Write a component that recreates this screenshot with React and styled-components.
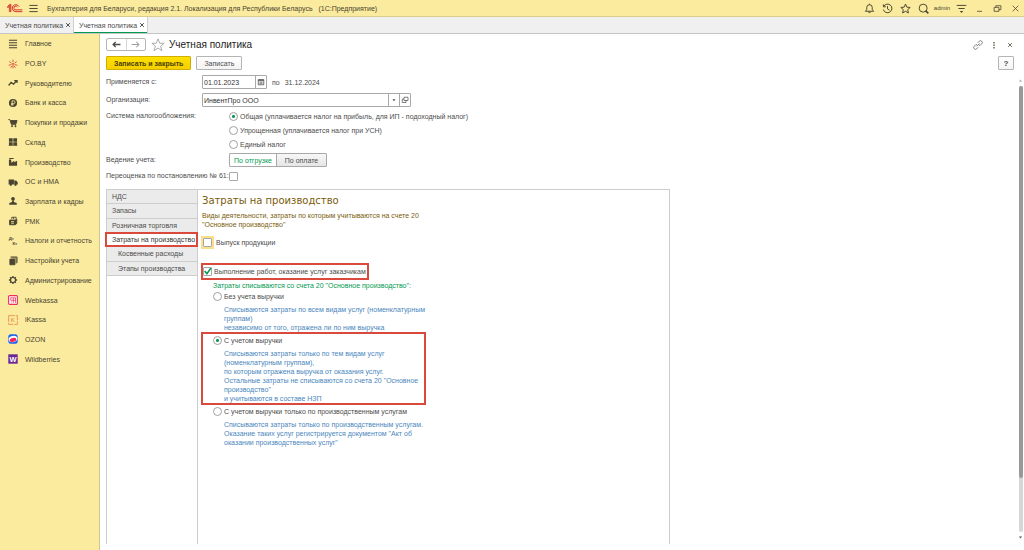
import React from 'react'
import styled, { createGlobalStyle, css } from 'styled-components'

const colors = {
  bar: '#faeb9e',
  tabs: '#f0f0f0',
  text: '#4c4c4c',
  red: '#d9493c',
  green: '#009a50',
  gold: '#7a5c0a',
  blue: '#4a86bd',
  line: '#a8a8a8',
}

const GlobalStyle = createGlobalStyle`
  * {
    box-sizing: border-box;
  }
  body {
    margin: 0;
    background: #fff;
    color: ${colors.text};
    font: 7px/9px 'Liberation Sans', Arial, sans-serif;
  }
  button, input {
    margin: 0;
    padding: 0;
    font: inherit;
    color: inherit;
  }
  a {
    color: inherit;
    text-decoration: none;
  }
  svg {
    display: block;
    flex: none;
  }
`

const Page = styled.div`
  display: flex;
  flex-direction: column;
  min-height: 100vh;
`
const TopBar = styled.header`
  display: flex;
  align-items: center;
  height: 17px;
  padding-left: 6px;
  background: ${colors.bar};
  border-bottom: 1px solid #d9cd8e;
`
const AppTitle = styled.h1`
  flex: 1;
  margin: 0 0 0 4px;
  font-size: 7px;
  font-weight: normal;
  color: #4a4430;
  white-space: pre;
`
const IconButton = styled.button`
  display: flex;
  align-items: center;
  justify-content: center;
  width: ${props => props.$width || 18}px;
  height: 14px;
  border: 0;
  background: none;
  color: #4a4430;
`
const User = styled.a`
  width: 20px;
  font-size: 6px;
  text-align: center;
  color: #4a4430;
`
const TabBar = styled.nav`
  display: flex;
  height: 17px;
  background: ${colors.tabs};
  border-bottom: 1px solid #c6c6c6;
`
const WindowTab = styled.button`
  display: flex;
  align-items: center;
  gap: 2px;
  width: 74px;
  padding: 0 0 0 5px;
  border: 0;
  border-right: 1px solid #d0d0d0;
  background: ${props => (props.$active ? '#fff' : 'none')};
  box-shadow: ${props =>
    props.$active ? `inset 0 -1px ${colors.green}` : 'none'};
  white-space: nowrap;
`
const Body = styled.div`
  display: flex;
  flex: 1;
`
const Sidebar = styled.nav`
  flex: none;
  width: 100px;
  background: ${colors.bar};
  border-right: 1px solid #cfc58f;
`
const Menu = styled.ul`
  display: grid;
  grid-template-rows: repeat(17, 1fr);
  height: 335px;
  margin: 0;
  padding: 0;
  list-style: none;
`
const MenuItem = styled.li`
  display: flex;
  align-items: center;
  a {
    display: flex;
    align-items: center;
    gap: 7px;
    padding-left: 8px;
    color: #4a4430;
    white-space: nowrap;
  }
`
const Main = styled.main`
  display: flex;
  flex-direction: column;
  flex: 1;
  min-width: 0;
  padding: 4px 0 6px 6px;
`
const Heading = styled.div`
  display: flex;
  align-items: center;
  height: 13px;
  padding-right: 6px;
`
const Arrows = styled.div`
  display: flex;
  width: 40px;
  height: 13px;
  margin-right: 5px;
  border: 1px solid #b5b5b5;
  border-radius: 2px;
  button {
    flex: 1;
    display: flex;
    align-items: center;
    justify-content: center;
    border: 0;
    background: none;
  }
  button + button {
    border-left: 1px solid #d5d5d5;
    color: #a0a0a0;
  }
`
const FormTitle = styled.h2`
  flex: 1;
  margin: 0 0 0 4px;
  font-size: 10px;
  line-height: 13px;
  font-weight: normal;
  color: #222;
`
const Columns = styled.div`
  display: flex;
  flex: 1;
  margin-top: 5px;
`
const Content = styled.div`
  display: flex;
  flex-direction: column;
  flex: 1;
`
const Commands = styled.div`
  display: flex;
  gap: 5px;
  margin-bottom: 5px;
`
const Button = styled.button`
  height: 14px;
  padding: 0 7px;
  border: 1px solid #b5b5b5;
  border-radius: 1px;
  background: linear-gradient(#fff, #f4f4f4);
  white-space: nowrap;
  ${props =>
    props.$primary &&
    css`
      border-color: #d0ae00;
      background: linear-gradient(#ffe000, #f5cf00);
      font-weight: bold;
      color: #4a4000;
    `}
`
const Field = styled.div`
  display: grid;
  grid-template-columns: 96px 1fr;
  align-items: center;
  min-height: 14px;
  margin-bottom: ${props => props.$gap || 0}px;
  white-space: nowrap;
`
const FieldLabel = styled.label`
  line-height: 14px;
  align-self: start;
`
const Row = styled.div`
  display: flex;
  align-items: center;
  gap: 5px;
`
const InputBox = styled.div`
  display: flex;
  width: ${props => props.$width}px;
  height: 14px;
  border: 1px solid ${colors.line};
  border-radius: 1px;
  input {
    flex: 1;
    min-width: 0;
    padding-left: 1px;
    border: 0;
    outline: 0;
    color: #333;
  }
  button {
    display: flex;
    align-items: center;
    justify-content: center;
    width: 11px;
    border: 0;
    border-left: 1px solid ${colors.line};
    background: none;
  }
`
const Options = styled.div`
  padding-left: 27px;
`
const Option = styled.label`
  display: flex;
  align-items: center;
  gap: 2px;
  height: ${props => props.$height || 14}px;
`
const Radio = styled.input.attrs({ type: 'radio' })`
  appearance: none;
  flex: none;
  width: 9px;
  height: 9px;
  border: 1px solid #a0a0a0;
  border-radius: 50%;
  background: #fff;
  &:checked {
    background: radial-gradient(${colors.green} 1px, #fff 2px);
  }
`
const CheckMark = styled.span`
  display: grid;
  flex: none;
  width: ${props => (props.$focused ? 13 : 9)}px;
  border: ${props => (props.$focused ? '2px solid #fae08c' : '0')};
  > * {
    grid-area: 1 / 1;
  }
  svg {
    visibility: hidden;
    pointer-events: none;
    color: ${colors.green};
  }
  input:checked + svg {
    visibility: visible;
  }
`
const CheckInput = styled.input.attrs({ type: 'checkbox' })`
  appearance: none;
  width: 9px;
  height: 9px;
  border: 1px solid #a8a8a8;
  border-radius: 1px;
  background: #fff;
`
const Segments = styled.div`
  display: flex;
  width: 98px;
  height: 14px;
  margin-left: 27px;
  border: 1px solid ${colors.line};
  border-radius: 1px;
  button {
    flex: 1;
    border: 0;
    background: linear-gradient(#f7f7f7, #e6e6e6);
  }
  button[aria-pressed='true'] {
    flex: 0 0 47px;
    border-right: 1px solid ${colors.line};
    background: #fff;
    color: ${colors.green};
  }
`
const Panel = styled.section`
  display: flex;
  flex: 1;
  width: 63.5%;
  margin-top: 6px;
  border: 1px solid #cdcdcd;
  border-bottom: 0;
`
const SideTabs = styled.div`
  flex: none;
  width: 91px;
  border-right: 1px solid #cdcdcd;
`
const TabList = styled.div`
  display: grid;
  grid-template-rows: repeat(6, 1fr);
  height: 86px;
`
const SideTab = styled.button`
  padding: 0 0 0 ${props => (props.$nested ? 11 : 5)}px;
  border: 0;
  border-bottom: 1px solid #cdcdcd;
  background: #ebebeb;
  text-align: left;
  white-space: nowrap;
  &[aria-selected='true'] {
    margin: -1px -1px 0 -2px;
    border: 2px solid ${colors.red};
    background: #fff;
    color: #333;
  }
`
const Costs = styled.div`
  padding: 4px 3px;
`
const CostsTitle = styled.h3`
  margin: 0 0 3px 1px;
  font: 10px/14px 'DejaVu Sans', Verdana, sans-serif;
  color: ${colors.gold};
`
const CostsNote = styled.p`
  margin: 0 0 7px 1px;
  color: ${colors.gold};
  white-space: pre-line;
`
const Marked = styled.div`
  width: ${props => props.$width}px;
  padding: 0 ${props => (props.$marked ? 0 : 2)}px;
  border: ${props => (props.$marked ? `2px solid ${colors.red}` : '0')};
`
const CostsLabel = styled.p`
  margin: 1px 0 0 12px;
  color: ${colors.green};
`
const Variant = styled(Marked)`
  label {
    margin-left: 10px;
  }
  p {
    margin: 3px 0 0 21px;
    color: ${colors.blue};
    white-space: pre;
  }
`
const Aside = styled.aside`
  display: flex;
  flex-direction: column;
  align-items: flex-end;
  width: 30px;
`
const HelpButton = styled(Button)`
  width: 16px;
  margin: 0 10px 8px 0;
  padding: 0;
  font-weight: bold;
  font-size: 8px;
`
const ScrollBar = styled.div`
  display: flex;
  flex-direction: column;
  align-items: center;
  flex: 1;
  gap: 3px;
  width: 5px;
  margin: 0 1px 4px 0;
`
const ScrollTrack = styled.div`
  flex: 1;
  width: 4px;
  border-radius: 2px;
  background: #d6d6d6;
`
const ScrollThumb = styled.div`
  height: 88%;
  border-radius: 2px;
  background: #999;
`

const Icon = ({ size = 11, children, ...rest }) => (
  <svg
    width={size}
    height={size}
    viewBox="0 0 16 16"
    fill="none"
    stroke="currentColor"
    strokeWidth="1.4"
    aria-hidden="true"
    {...rest}
  >
    {children}
  </svg>
)

const Logo = () => (
  <svg width="18" height="12" viewBox="0 0 54 36" fill="none" aria-hidden="true">
    <g stroke="#d5322c" strokeWidth="3">
      <path strokeWidth="2" fill="#e2604a" d="M4 14L11 7H15V29H10V14L5 17Z" />
      <path d="M39 14A10.500 10.500 0 1 0 30 29H49" />
      <path d="M34 15.500A5.500 5.500 0 1 0 30 23.500H49" />
    </g>
  </svg>
)

const Close = () => (
  <Icon size={6} strokeWidth="2.600">
    <path d="M3 3L13 13M13 3L3 13" />
  </Icon>
)

const menu = [
  ['Главное', <path strokeWidth="1.700" d="M1.500 2H14.500M1.500 6H14.500M1.500 10H14.500M1.500 14H14.500" />],
  [
    'PO.BY',
    <g stroke="#dc4a35">
      <path d="M8 1V5M8 11V15M2 4L5.500 6.500M14 4L10.500 6.500M1 10L5 9M15 10L11 9M4 14L6.500 11M12 14L9.500 11" />
      <circle cx="8" cy="8.500" r="1.600" />
    </g>,
  ],
  ['Руководителю', <path strokeWidth="2" d="M1 12L5 7L9 10L14 4M10 4H14.500V8" />],
  [
    'Банк и касса',
    <g>
      <circle cx="8" cy="8" r="6.500" fill="currentColor" stroke="none" />
      <path stroke="#faeb9e" d="M6.500 12.500V4.500H9A2 2 0 0 1 9 9H5M5 10.800H9" />
    </g>,
  ],
  [
    'Покупки и продажи',
    <g>
      <path d="M0.500 2.500H3L5.500 10.500H13" />
      <path fill="currentColor" d="M4 4H14.500L13 9H5.500Z" />
      <circle cx="6.500" cy="13" r="1" fill="currentColor" />
      <circle cx="12" cy="13" r="1" fill="currentColor" />
    </g>,
  ],
  [
    'Склад',
    <path fill="currentColor" stroke="none" d="M1.500 2H7.500V7.500H1.500ZM8.500 2H14.500V7.500H8.500ZM1.500 8.500H7.500V13H1.500ZM8.500 8.500H14.500V13H8.500ZM1 13.500H15V14.500H1Z" />,
  ],
  [
    'Производство',
    <path fill="currentColor" stroke="none" d="M1.500 14V4H5L5.500 9L10 6V8.500L14.500 6V14ZM2 1.500H9V3.200H2Z" />,
  ],
  [
    'ОС и НМА',
    <g fill="currentColor" stroke="none">
      <path d="M1 4H9.500V12H1ZM10 5.500H13L15.500 8.500V12H10Z" />
      <circle cx="4.500" cy="12.500" r="1.800" />
      <circle cx="12" cy="12.500" r="1.800" />
    </g>,
  ],
  [
    'Зарплата и кадры',
    <g fill="currentColor" stroke="none">
      <circle cx="8" cy="4.500" r="3" />
      <path d="M6.500 7H9.500V9.500L14 11V14H2V11L6.500 9.500Z" />
    </g>,
  ],
  [
    'РМК',
    <g>
      <path d="M6 5V2H13V5M9 2V5" />
      <path fill="currentColor" d="M2.500 6.500H11.500V14H2.500ZM11.500 6.500L14 5V12L11.500 14" />
      <path stroke="#faeb9e" d="M5 9H9.500M5 11.500H9.500" />
    </g>,
  ],
  [
    'Налоги и отчетность',
    <g fill="currentColor" stroke="none" fontSize="7" fontWeight="bold">
      <text x="1" y="7">Дт</text>
      <text x="7" y="14">Кт</text>
    </g>,
  ],
  [
    'Настройки учета',
    <g>
      <path fill="currentColor" d="M3 5H11V14H3Z" />
      <path d="M5 3H13V12M4 1.500H14.500V11" />
    </g>,
  ],
  [
    'Администрирование',
    <g>
      <circle cx="8" cy="8" r="4" strokeWidth="1.800" />
      <path strokeWidth="2.200" d="M8 1.500V4M8 12V14.500M1.500 8H4M12 8H14.500M3.500 3.500L5.200 5.200M10.800 10.800L12.500 12.500M12.500 3.500L10.800 5.200M5.200 10.800L3.500 12.500" />
    </g>,
  ],
  [
    'Webkassa',
    <g>
      <rect x="1" y="1" width="14" height="14" rx="1.500" fill="#fff" stroke="#ee2f5b" strokeWidth="1.800" />
      <path stroke="#ee2f5b" strokeWidth="1.200" d="M4 4.500H12.500M4.500 4.500V8.500H12M5.500 11H6.500M5.500 13H6.500M8.500 4.500V12.500M12 4.500V12.500" />
    </g>,
  ],
  [
    'iKassa',
    <g>
      <rect x="1" y="1" width="14" height="14" stroke="#e8914d" strokeDasharray="10 1.500" />
      <text x="4.500" y="11.500" fontSize="10" fill="#e87d35" stroke="none">K</text>
    </g>,
  ],
  [
    'OZON',
    <g stroke="none">
      <rect x="0.500" y="0.500" width="15" height="15" rx="4" fill="#1762f5" />
      <ellipse cx="8" cy="8" rx="7" ry="5" fill="#fff" transform="rotate(-15 8 8)" />
      <ellipse cx="8" cy="9.500" rx="5.500" ry="3.200" fill="#f4245e" transform="rotate(-15 8 9.500)" />
    </g>,
  ],
  [
    'Wildberries',
    <g stroke="none">
      <rect x="0.500" y="0.500" width="15" height="15" fill="#6c2592" />
      <text x="8" y="12.500" fontSize="12" fontWeight="bold" textAnchor="middle" fill="#fff">W</text>
    </g>,
  ],
]

const taxes = [
  'Общая (уплачивается налог на прибыль, для ИП - подоходный налог)',
  'Упрощенная (уплачивается налог при УСН)',
  'Единый налог',
]

const sections = [
  { title: 'НДС' },
  { title: 'Запасы' },
  { title: 'Розничная торговля' },
  { title: 'Затраты на производство', active: true },
  { title: 'Косвенные расходы', nested: true },
  { title: 'Этапы производства', nested: true },
]

const variants = [
  {
    title: 'Без учета выручки',
    text: `Списываются затраты по всем видам услуг (номенклатурным
группам)
независимо от того, отражена ли по ним выручка`,
  },
  {
    title: 'С учетом выручки',
    text: `Списываются затраты только по тем видам услуг
(номенклатурным группам),
по которым отражена выручка от оказания услуг.
Остальные затраты не списываются со счета 20 "Основное
производство"
и учитываются в составе НЗП`,
    marked: true,
  },
  {
    title: 'С учетом выручки только по производственным услугам',
    text: `Списываются затраты только по производственным услугам.
Оказание таких услуг регистрируется документом "Акт об
оказании производственных услуг"`,
  },
]

const Checkbox = ({ focused, ...rest }) => (
  <CheckMark $focused={focused}>
    <CheckInput {...rest} />
    <Icon size={9} strokeWidth="2.800">
      <path d="M3 7L7 12L14 2" />
    </Icon>
  </CheckMark>
)

const Header = () => (
  <TopBar>
    <Logo />
    <IconButton $width={19} aria-label="Меню">
      <Icon>
        <path d="M2 3.500H14M2 8H14M2 12.500H14" />
      </Icon>
    </IconButton>
    <AppTitle>
      {
        'Бухгалтерия для Беларуси, редакция 2.1. Локализация для Республики Беларусь   (1С:Предприятие)'
      }
    </AppTitle>
    <IconButton aria-label="Уведомления">
      <Icon>
        <path d="M2 12H14L12 9.500V6.500A4 4 0 0 0 4 6.500V9.500ZM6.500 12.500A1.500 1.500 0 0 0 9.500 12.500M8 1V2.500" />
      </Icon>
    </IconButton>
    <IconButton aria-label="История">
      <Icon>
        <path d="M2.500 5A6.300 6.300 0 1 1 2 9.500M2 2V5.500H5.500M8 4.500V8.500L11 10.500" />
      </Icon>
    </IconButton>
    <IconButton aria-label="Избранное">
      <Icon>
        <path d="M8 1.500L10 6L14.800 6.500L11.200 9.700L12.200 14.500L8 12L3.800 14.500L4.800 9.700L1.200 6.500L6 6Z" />
      </Icon>
    </IconButton>
    <IconButton aria-label="Поиск">
      <Icon>
        <circle cx="7.500" cy="7.500" r="5.800" />
        <path strokeWidth="2.400" d="M11 11L15 15" />
      </Icon>
    </IconButton>
    <User href="#admin">admin</User>
    <IconButton aria-label="Настройки">
      <Icon>
        <path d="M1 3.500H15M3.500 8H12.500" />
        <path fill="currentColor" stroke="none" d="M5.500 11.500H10.500L8 14.500Z" />
      </Icon>
    </IconButton>
    <IconButton aria-label="Свернуть">
      <Icon size={9}>
        <path d="M3.500 13H12.500" />
      </Icon>
    </IconButton>
    <IconButton aria-label="Восстановить">
      <Icon size={9}>
        <path d="M2 6H10.500V13H2ZM5 6V3H14V10H10.500" />
      </Icon>
    </IconButton>
    <IconButton aria-label="Закрыть">
      <Icon size={9}>
        <path d="M3 3L13 13M13 3L3 13" />
      </Icon>
    </IconButton>
  </TopBar>
)

const Settings = () => (
  <>
    <Commands>
      <Button $primary>Записать и закрыть</Button>
      <Button>Записать</Button>
    </Commands>
    <Field $gap={4}>
      <FieldLabel htmlFor="from">Применяется с:</FieldLabel>
      <Row>
        <InputBox $width={65}>
          <input id="from" defaultValue="01.01.2023" />
          <button aria-label="Календарь">
            <Icon size={8} strokeWidth="1.600">
              <path d="M2.500 3H13.500V13.500H2.500ZM2.500 5H13.500M5 8H11M5 10.500H11" />
            </Icon>
          </button>
        </InputBox>
        <span>по</span>
        <span>31.12.2024</span>
      </Row>
    </Field>
    <Field $gap={2}>
      <FieldLabel htmlFor="company">Организация:</FieldLabel>
      <InputBox $width={209}>
        <input id="company" defaultValue="ИнвентПро ООО" />
        <button aria-label="Выбрать">
          <Icon size={6}>
            <path fill="currentColor" stroke="none" d="M4 6H12L8 11Z" />
          </Icon>
        </button>
        <button aria-label="Открыть">
          <Icon size={8}>
            <path d="M6 2.500H14V9H6ZM6 6H2.500V13H10V9" />
          </Icon>
        </button>
      </InputBox>
    </Field>
    <Field $gap={2}>
      <FieldLabel as="span">Система налогообложения:</FieldLabel>
      <Options>
        {taxes.map((tax, i) => (
          <Option key={tax}>
            <Radio name="tax" defaultChecked={i === 0} />
            {tax}
          </Option>
        ))}
      </Options>
    </Field>
    <Field $gap={2}>
      <FieldLabel as="span">Ведение учета:</FieldLabel>
      <Segments>
        <button aria-pressed="true">По отгрузке</button>
        <button aria-pressed="false">По оплате</button>
      </Segments>
    </Field>
    <Field>
      <FieldLabel htmlFor="revaluation">
        Переоценка по постановлению № 61:
      </FieldLabel>
      <Options>
        <Checkbox id="revaluation" />
      </Options>
    </Field>
  </>
)

const ProductionCosts = () => (
  <Costs>
    <CostsTitle>Затраты на производство</CostsTitle>
    <CostsNote>
      {`Виды деятельности, затраты по которым учитываются на счете 20
"Основное производство"`}
    </CostsNote>
    <Option $height={12}>
      <Checkbox focused />
      Выпуск продукции
    </Option>
    <Option as="div" $height={15} />
    <Marked $marked $width={168}>
      <Option $height={13}>
        <Checkbox defaultChecked />
        Выполнение работ, оказание услуг заказчикам
      </Option>
    </Marked>
    <CostsLabel>
      Затраты списываются со счета 20 "Основное производство":
    </CostsLabel>
    {variants.map(({ title, text, marked }) => (
      <Variant key={title} $marked={marked} $width={225}>
        <Option $height={12}>
          <Radio name="variant" defaultChecked={marked} />
          {title}
        </Option>
        <p>{text}</p>
      </Variant>
    ))}
  </Costs>
)

const App = () => (
  <Page>
    <GlobalStyle />
    <Header />
    <TabBar>
      <WindowTab>
        Учетная политика <Close />
      </WindowTab>
      <WindowTab $active>
        Учетная политика <Close />
      </WindowTab>
    </TabBar>
    <Body>
      <Sidebar>
        <Menu>
          {menu.map(([title, icon]) => (
            <MenuItem key={title}>
              <a href="#menu">
                <Icon size={10}>{icon}</Icon>
                {title}
              </a>
            </MenuItem>
          ))}
        </Menu>
      </Sidebar>
      <Main>
        <Heading>
          <Arrows>
            <button aria-label="Назад">
              <Icon size={9} strokeWidth="2.400">
                <path d="M15 8H2M6.500 3.500L2 8L6.500 12.500" />
              </Icon>
            </button>
            <button aria-label="Вперед">
              <Icon size={9} strokeWidth="1.800">
                <path d="M1 8H14M9.500 3.500L14 8L9.500 12.500" />
              </Icon>
            </button>
          </Arrows>
          <Icon size={14} stroke="#a0a0a0" strokeWidth="1">
            <path d="M8 1L10 6H15L11 9.300L12.500 14.500L8 11.500L3.500 14.500L5 9.300L1 6H6Z" />
          </Icon>
          <FormTitle>Учетная политика</FormTitle>
          <IconButton $width={16} aria-label="Ссылка">
            <Icon size={10} stroke="#707070">
              <path d="M6 10L10.500 5.500M7.500 4.500L10 2A2.800 2.800 0 0 1 14 6L11.500 8.500H9.500M8.500 11.500L6 14A2.800 2.800 0 0 1 2 10L4.500 7.500H6.500" />
            </Icon>
          </IconButton>
          <IconButton $width={16} aria-label="Еще">
            <Icon size={8} strokeWidth="2.400">
              <path d="M8 2V5M8 7V10M8 12V15" />
            </Icon>
          </IconButton>
          <IconButton $width={16} aria-label="Закрыть форму">
            <Icon size={6} strokeWidth="2">
              <path d="M3 3L13 13M13 3L3 13" />
            </Icon>
          </IconButton>
        </Heading>
        <Columns>
          <Content>
            <Settings />
            <Panel>
              <SideTabs>
                <TabList role="tablist">
                  {sections.map(({ title, active, nested }) => (
                    <SideTab
                      key={title}
                      role="tab"
                      aria-selected={!!active}
                      $nested={nested}
                    >
                      {title}
                    </SideTab>
                  ))}
                </TabList>
              </SideTabs>
              <ProductionCosts />
            </Panel>
          </Content>
          <Aside>
            <HelpButton>?</HelpButton>
            <ScrollBar>
              <Icon size={5} stroke="none" fill="#aaa">
                <path d="M3 11H13L8 5Z" />
              </Icon>
              <ScrollTrack>
                <ScrollThumb />
              </ScrollTrack>
              <Icon size={5} stroke="none" fill="#555">
                <path d="M3 5H13L8 11Z" />
              </Icon>
            </ScrollBar>
          </Aside>
        </Columns>
      </Main>
    </Body>
  </Page>
)

export default App
